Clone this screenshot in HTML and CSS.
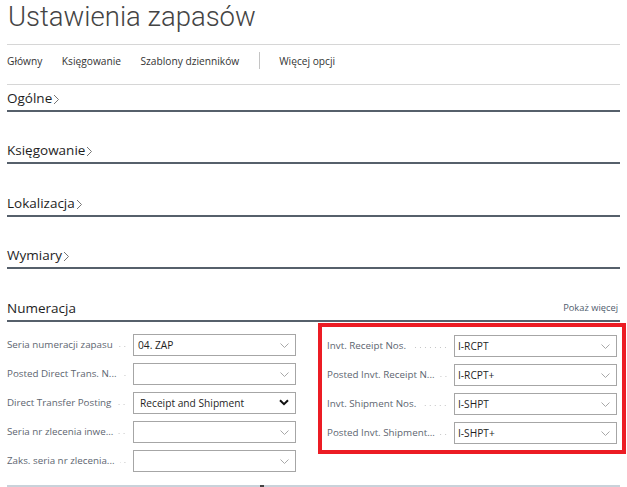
FILE: index.html
```html
<!DOCTYPE html>
<html lang="pl">
<head>
<meta charset="utf-8">
<title>Ustawienia zapasów</title>
<link rel="stylesheet" href="styles.css">
</head>
<body>
<div class="page">
  <h1 class="title">Ustawienia zapasów</h1>
  <nav class="toolbar">
    <span class="tb-item">Główny</span>
    <span class="tb-item">Księgowanie</span>
    <span class="tb-item">Szablony dzienników</span>
    <span class="tb-sep"></span>
    <span class="tb-item">Więcej opcji</span>
  </nav>

  <section class="tab">
    <h2 class="tab-head"><span>Ogólne</span><svg class="chev" width="7" height="11" viewBox="0 0 7 11"><path d="M1 1 L5.5 5.5 L1 10" fill="none" stroke="#767676" stroke-width="1"/></svg></h2>
  </section>
  <section class="tab">
    <h2 class="tab-head"><span>Księgowanie</span><svg class="chev" width="7" height="11" viewBox="0 0 7 11"><path d="M1 1 L5.5 5.5 L1 10" fill="none" stroke="#767676" stroke-width="1"/></svg></h2>
  </section>
  <section class="tab">
    <h2 class="tab-head"><span>Lokalizacja</span><svg class="chev" width="7" height="11" viewBox="0 0 7 11"><path d="M1 1 L5.5 5.5 L1 10" fill="none" stroke="#767676" stroke-width="1"/></svg></h2>
  </section>
  <section class="tab">
    <h2 class="tab-head"><span>Wymiary</span><svg class="chev" width="7" height="11" viewBox="0 0 7 11"><path d="M1 1 L5.5 5.5 L1 10" fill="none" stroke="#767676" stroke-width="1"/></svg></h2>
  </section>

  <section class="tab open">
    <div class="tab-head">
      <h2 class="tab-title">Numeracja</h2>
      <span class="more">Pokaż więcej</span>
    </div>
    <div class="fields">
      <div class="col col-left">
        <div class="row">
          <span class="label">Seria numeracji zapasu</span><span class="lead"></span>
          <div class="input"><span class="val">04. ZAP</span><svg class="dd" width="9" height="5" viewBox="0 0 9 5"><path d="M0.5 0.5 L4.5 4.5 L8.5 0.5" fill="none" stroke="#a8a8a8" stroke-width="1"/></svg></div>
        </div>
        <div class="row">
          <span class="label">Posted Direct Trans. N...</span><span class="lead"></span>
          <div class="input"><span class="val"></span><svg class="dd" width="9" height="5" viewBox="0 0 9 5"><path d="M0.5 0.5 L4.5 4.5 L8.5 0.5" fill="none" stroke="#a8a8a8" stroke-width="1"/></svg></div>
        </div>
        <div class="row">
          <span class="label">Direct Transfer Posting</span><span class="lead"></span>
          <div class="input"><span class="val val-select">Receipt and Shipment</span><svg class="dd-bold" width="10" height="7" viewBox="0 0 10 7"><path d="M1 1.2 L5 5.2 L9 1.2" fill="none" stroke="#111" stroke-width="2"/></svg></div>
        </div>
        <div class="row">
          <span class="label">Seria nr zlecenia inwe...</span><span class="lead"></span>
          <div class="input"><span class="val"></span><svg class="dd" width="9" height="5" viewBox="0 0 9 5"><path d="M0.5 0.5 L4.5 4.5 L8.5 0.5" fill="none" stroke="#a8a8a8" stroke-width="1"/></svg></div>
        </div>
        <div class="row">
          <span class="label">Zaks. seria nr zlecenia...</span><span class="lead"></span>
          <div class="input"><span class="val"></span><svg class="dd" width="9" height="5" viewBox="0 0 9 5"><path d="M0.5 0.5 L4.5 4.5 L8.5 0.5" fill="none" stroke="#a8a8a8" stroke-width="1"/></svg></div>
        </div>
      </div>

      <div class="col col-right">
        <div class="row">
          <span class="label">Invt. Receipt Nos.</span><span class="lead"></span>
          <div class="input"><span class="val">I-RCPT</span><svg class="dd" width="9" height="5" viewBox="0 0 9 5"><path d="M0.5 0.5 L4.5 4.5 L8.5 0.5" fill="none" stroke="#a8a8a8" stroke-width="1"/></svg></div>
        </div>
        <div class="row">
          <span class="label">Posted Invt. Receipt N...</span><span class="lead"></span>
          <div class="input"><span class="val">I-RCPT+</span><svg class="dd" width="9" height="5" viewBox="0 0 9 5"><path d="M0.5 0.5 L4.5 4.5 L8.5 0.5" fill="none" stroke="#a8a8a8" stroke-width="1"/></svg></div>
        </div>
        <div class="row">
          <span class="label">Invt. Shipment Nos.</span><span class="lead"></span>
          <div class="input"><span class="val">I-SHPT</span><svg class="dd" width="9" height="5" viewBox="0 0 9 5"><path d="M0.5 0.5 L4.5 4.5 L8.5 0.5" fill="none" stroke="#a8a8a8" stroke-width="1"/></svg></div>
        </div>
        <div class="row">
          <span class="label">Posted Invt. Shipment...</span><span class="lead"></span>
          <div class="input"><span class="val">I-SHPT+</span><svg class="dd" width="9" height="5" viewBox="0 0 9 5"><path d="M0.5 0.5 L4.5 4.5 L8.5 0.5" fill="none" stroke="#a8a8a8" stroke-width="1"/></svg></div>
        </div>
      </div>
    </div>
  </section>
  <div class="bottom-bar"><span class="bar-mark"></span></div>
</div>
</body>
</html>
```

FILE: styles.css
```css
html, body {
  margin: 0;
  padding: 0;
  background: #ffffff;
  overflow: hidden;
}
body {
  font-family: "Open Sans", "Noto Sans", sans-serif;
  color: #212121;
  width: 627px;
  height: 487px;
}
.page {
  padding: 0 7px;
  height: 487px;
  display: flex;
  flex-direction: column;
  box-sizing: border-box;
}
.title {
  margin: 0;
  height: 44px;
  font-family: Roboto, "Open Sans", sans-serif;
  font-size: 27.5px;
  font-weight: 300;
  line-height: 34px;
  color: #444;
  padding-left: 1px;
}
.toolbar {
  box-sizing: border-box;
  height: 41px;
  padding-bottom: 8px;
  border-top: 1px solid #d6d6d6;
  border-bottom: 1px solid #d6d6d6;
  display: flex;
  align-items: center;
  gap: 19.5px;
  font-size: 10.2px;
  color: #333;
}
.tb-sep {
  width: 1px;
  height: 17px;
  background: #c4c4c4;
}
.tab {
  margin-top: 25.5px;
}
.tab:first-of-type {
  margin-top: 0;
}
.tab-head {
  margin: 0;
  border-bottom: 2px solid #56606b;
  display: flex;
  align-items: flex-end;
  padding-bottom: 3px;
  box-sizing: border-box;
  height: 27px;
  font-size: 13.5px;
  font-weight: 500;
  color: #1e1e1e;
}
.tab-head .chev {
  margin-left: 1px;
  margin-bottom: 2px;
}
.tab:first-of-type .tab-head {
  height: 26.5px;
}
.open .tab-head {
  justify-content: space-between;
  padding-right: 2px;
}
.tab-title {
  margin: 0;
  font-size: 13.5px;
  font-weight: 500;
  color: #1e1e1e;
}
.more {
  font-size: 9.3px;
  font-weight: 400;
  color: #505c6d;
  margin-bottom: 3px;
}
.fields {
  display: flex;
  align-items: flex-start;
}
.col {
  display: flex;
  flex-direction: column;
  gap: 7px;
  flex: none;
}
.col-left {
  width: 289px;
  padding-top: 12px;
}
.col-right {
  margin-left: 22px;
  margin-top: 1px;
  border: 4px solid #ec1c24;
  padding: 8px 5px 6px 5px;
  width: 308px;
  box-sizing: border-box;
}
.row {
  display: flex;
  align-items: center;
  height: 22px;
}
.label {
  font-size: 9.8px;
  color: #5d6570;
  white-space: nowrap;
  flex: none;
}
.lead {
  flex: 1;
  height: 3px;
  margin: 4px 6px 0 5px;
  background-image: radial-gradient(circle, #c6c6c6 0.7px, transparent 1px);
  background-size: 5px 3px;
  background-repeat: repeat-x;
  background-position: right center;
}
.input {
  width: 163px;
  height: 22px;
  box-sizing: border-box;
  border: 1px solid #a6a6a6;
  display: flex;
  align-items: center;
  justify-content: space-between;
  padding: 0 6px 0 4px;
  flex: none;
}
.col-right .input {
  padding-left: 3px;
}
.val {
  font-size: 10.2px;
  color: #1f1f1f;
}
.val-select {
  padding-left: 2px;
}
.dd {
  margin-top: 1px;
}
.bottom-bar {
  margin-top: auto;
  height: 2px;
  background: #c9d2da;
  position: relative;
}
.bar-mark {
  position: absolute;
  left: 253px;
  top: 0;
  width: 4px;
  height: 2px;
  background: #444;
}
```
